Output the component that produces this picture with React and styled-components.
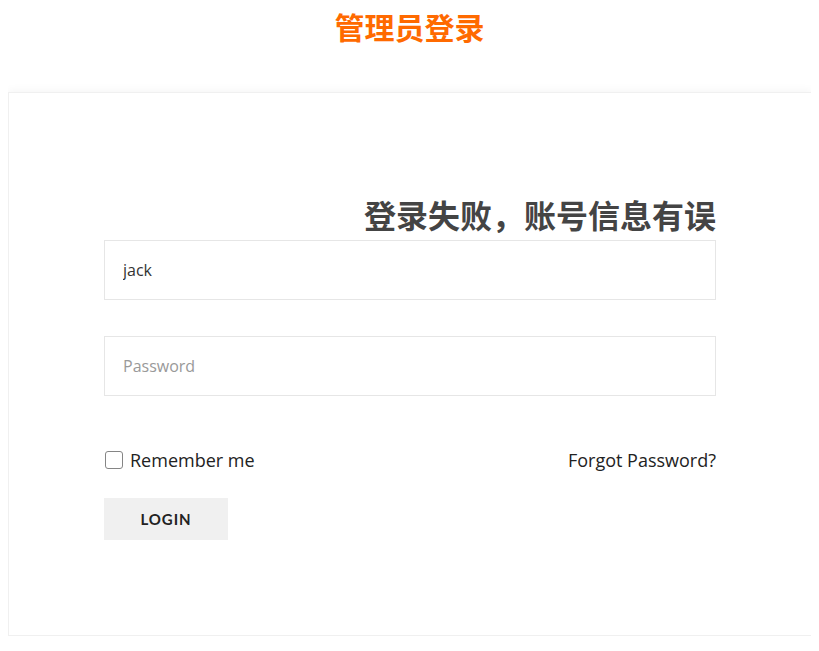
import React from "react";
import styled, { createGlobalStyle } from "styled-components";

const Global = createGlobalStyle`
  body {
    margin: 8px;
    background: #fff;
    font-family: "Open Sans", "Noto Sans CJK SC", sans-serif;
    color: #333;
  }
  * { box-sizing: border-box; }
`;

const Title = styled.h1`
  margin: 0 0 48px;
  text-align: center;
  font-size: 30px;
  line-height: 36px;
  font-weight: 700;
  color: #ff6a00;
  font-family: "Noto Sans CJK SC", sans-serif;
`;

const Card = styled.div`
  background: #fff;
  border: 1px solid #f0f0f0;
  box-shadow: 0 0 10px rgba(0, 0, 0, 0.06);
  padding: 95px;
  margin-right: -1px;
`;

const ErrorHeading = styled.h2`
  margin: 0;
  text-align: right;
  font-size: 32px;
  line-height: 52px;
  font-weight: 700;
  color: #444;
  font-family: "Noto Sans CJK SC", sans-serif;
`;

const Form = styled.form`
  display: flex;
  flex-direction: column;
`;

const Input = styled.input`
  height: 60px;
  width: 100%;
  border: 1px solid #e6e6e6;
  padding: 0 18px;
  font-family: "Open Sans", sans-serif;
  font-size: 16px;
  color: #333;
  outline: none;
  margin-bottom: ${(p) => p.$gap || 0}px;
  &::placeholder { color: #999; }
`;

const Row = styled.div`
  display: flex;
  justify-content: space-between;
  align-items: center;
  height: 24px;
  margin-top: 52px;
`;

const CheckLabel = styled.label`
  display: flex;
  align-items: center;
  gap: 7px;
  font-size: 18px;
  color: #222;
`;

const Check = styled.input`
  appearance: none;
  width: 18px;
  height: 18px;
  margin: 0 0 0 1px;
  border: 1.5px solid #858585;
  border-radius: 3px;
  background: #fff;
`;

const Forgot = styled.a`
  font-size: 18px;
  color: #222;
  text-decoration: none;
`;

const Button = styled.button`
  margin-top: 26px;
  align-self: flex-start;
  width: 124px;
  height: 42px;
  border: none;
  background: #f0f0f0;
  font-family: "Lato", sans-serif;
  font-weight: 700;
  font-size: 15px;
  letter-spacing: 0.9px;
  color: #222;
`;

export default function App() {
  return (
    <>
      <Global />
      <Title>管理员登录</Title>
      <Card>
        <ErrorHeading>登录失败，账号信息有误</ErrorHeading>
        <Form onSubmit={(e) => e.preventDefault()}>
          <Input type="text" defaultValue="jack" $gap={36} />
          <Input type="password" placeholder="Password" />
          <Row>
            <CheckLabel>
              <Check type="checkbox" />
              Remember me
            </CheckLabel>
            <Forgot href="#">Forgot Password?</Forgot>
          </Row>
          <Button type="submit">LOGIN</Button>
        </Form>
      </Card>
    </>
  );
}
